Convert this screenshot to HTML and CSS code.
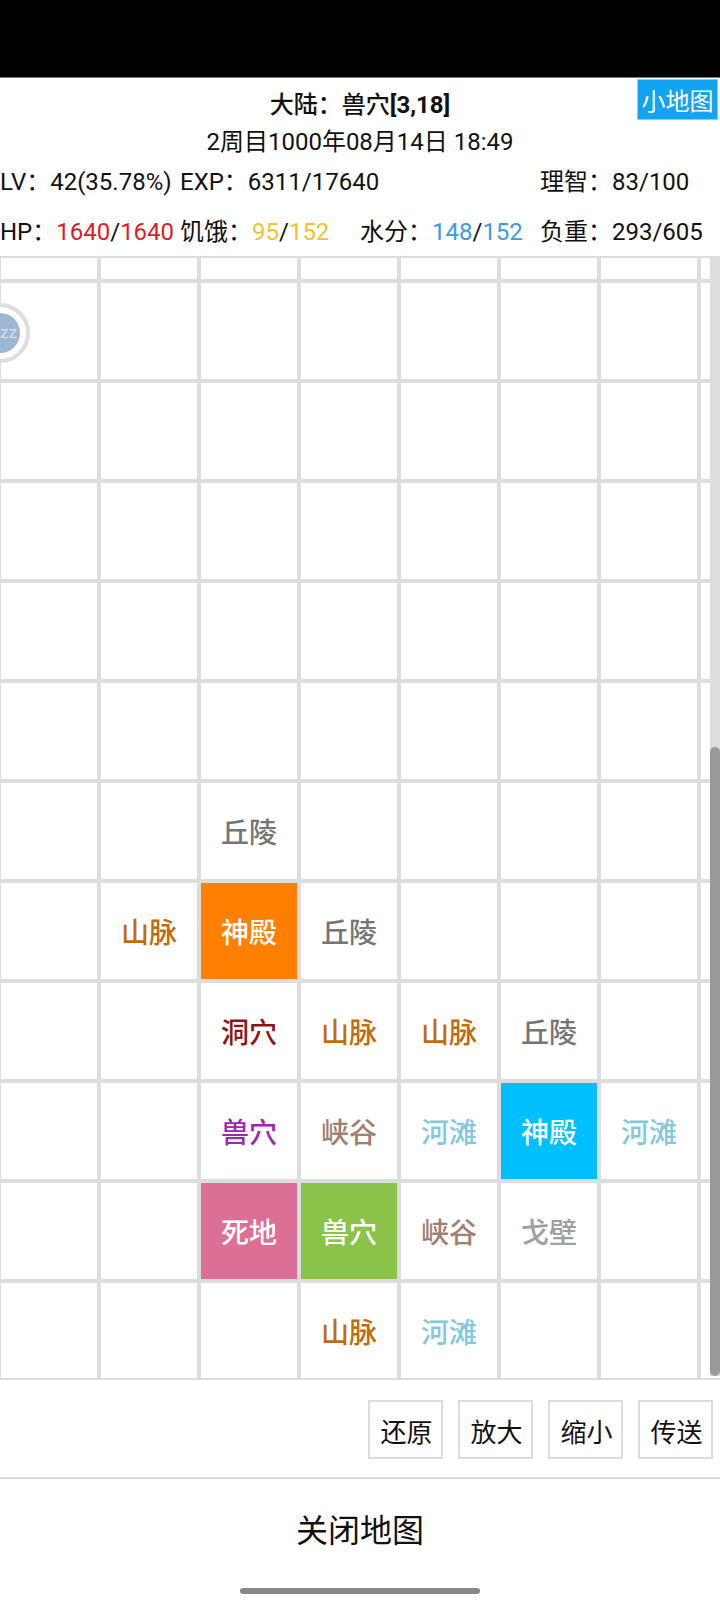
FILE: index.html
```html
<!DOCTYPE html>
<html lang="zh-CN">
<head>
<meta charset="UTF-8">
<title>地图</title>
<link rel="stylesheet" href="styles.css">
</head>
<body>

<div class="statusbar"></div>

<header class="info">
  <div class="title"><span>大陆：兽穴<b>[3,18]</b></span><button class="minimap">小地图</button></div>
  <div class="date">2周目1000年08月14日 18:49</div>
  <div class="stats stats-a">
    <span>LV：42(35.78%)</span>
    <span class="wide">EXP：6311/17640</span>
    <span>理智：83/100</span>
  </div>
  <div class="stats stats-b">
    <span>HP：<i class="red">1640</i>/<i class="red">1640</i></span>
    <span>饥饿：<i class="yellow">95</i>/<i class="yellow">152</i></span>
    <span>水分：<i class="blue">148</i>/<i class="blue">152</i></span>
    <span>负重：293/605</span>
  </div>
</header>

<section class="map">
  <div class="grid">
    <div></div><div></div><div></div><div></div><div></div><div></div><div></div><div></div>

    <div></div><div></div><div></div><div></div><div></div><div></div><div></div><div></div>
    <div></div><div></div><div></div><div></div><div></div><div></div><div></div><div></div>
    <div></div><div></div><div></div><div></div><div></div><div></div><div></div><div></div>
    <div></div><div></div><div></div><div></div><div></div><div></div><div></div><div></div>
    <div></div><div></div><div></div><div></div><div></div><div></div><div></div><div></div>

    <div></div><div></div><div class="hill">丘陵</div><div></div><div></div><div></div><div></div><div></div>
    <div></div><div class="mountain">山脉</div><div class="fill orange">神殿</div><div class="hill">丘陵</div><div></div><div></div><div></div><div></div>
    <div></div><div></div><div class="cave">洞穴</div><div class="mountain">山脉</div><div class="mountain">山脉</div><div class="hill">丘陵</div><div></div><div></div>
    <div></div><div></div><div class="lair">兽穴</div><div class="gorge">峡谷</div><div class="beach">河滩</div><div class="fill sky">神殿</div><div class="beach">河滩</div><div></div>
    <div></div><div></div><div class="fill pink">死地</div><div class="fill green">兽穴</div><div class="gorge">峡谷</div><div class="desert">戈壁</div><div></div><div></div>
    <div></div><div></div><div></div><div class="mountain">山脉</div><div class="beach">河滩</div><div></div><div></div><div></div>
  </div>

  <div class="player"><span>zz</span></div>
  <div class="scrollbar"><div class="thumb"></div></div>
</section>

<div class="tools">
  <button>还原</button>
  <button>放大</button>
  <button>缩小</button>
  <button>传送</button>
</div>

<div class="close">关闭地图</div>

<div class="homebar"></div>

</body>
</html>
```

FILE: styles.css
```css
*{box-sizing:border-box}
html,body{margin:0;height:1608px;overflow:hidden}
body{background:#fff;color:#111;font-family:Roboto,"Noto Sans CJK SC",sans-serif;font-size:24px}
i{font-style:normal}
button{font:inherit;color:inherit;background:none;cursor:pointer}

.statusbar{height:78px;background:#000;border-bottom:1px solid #777}

.info{height:178px;position:relative}
.title{height:48px;display:flex;justify-content:center;align-items:center;font-weight:500}
.title b{font-weight:700}
.minimap{position:absolute;top:1px;right:2px;width:81px;height:41px;padding:0;border:1px solid #9cc9e2;background:#12a3f2;color:#fff;font-weight:400}
.date{height:32px;line-height:32px;text-align:center}
.stats{display:grid;grid-template-columns:repeat(4,180px);white-space:nowrap}
.stats-a{height:48px;line-height:48px}
.stats-a .wide{grid-column:span 2}
.stats-b{height:50px;line-height:52px}
.red{color:#e01b24}
.yellow{color:#f2c230}
.blue{color:#3d9be0}

.map{height:1124px;position:relative;overflow:hidden;border-top:2px solid #ddd;border-bottom:2px solid #ddd}
.grid{display:grid;height:100%;padding-left:1px;background:#ddd;gap:4px;
  grid-template-columns:repeat(7,96px) 1fr;
  grid-template-rows:21px repeat(10,96px) 1fr}
.grid div{display:flex;align-items:center;justify-content:center;background:#fff;font-size:28px;font-weight:500}
.hill{color:#757575}
.mountain{color:#c26c0e}
.cave{color:#8e1414}
.lair{color:#9c27b0}
.gorge{color:#a1806f}
.beach{color:#84c8dc}
.desert{color:#a0a0a0}
.grid .fill{color:#fff}
.grid .orange{background:#ff8000}
.grid .sky{background:#00bfff}
.grid .pink{background:#dc6f95}
.grid .green{background:#8bc34a}

.player{position:absolute;left:-30px;top:45px;width:60px;height:60px;display:flex;align-items:center;justify-content:center;border:4px solid #ddd;border-radius:50%;background:#fff}
.player span{width:40px;height:40px;border-radius:50%;background:#9db6d6;color:#d8dfe8;font-size:17px;line-height:38px;text-align:left;padding-left:20px;white-space:nowrap;overflow:hidden}

.scrollbar{position:absolute;top:0;right:0;bottom:2px;width:10px;background:#ddd}
.thumb{position:absolute;left:0;right:0;top:489px;bottom:0;background:#999;border-radius:5px}

.tools{height:99px;display:flex;justify-content:flex-end;gap:15px;padding:20px 7px 0 0;border-bottom:2px solid #ddd}
.tools button{width:75px;height:59px;padding:2px 0 0 2px;border:2px solid #ddd;background:#fff;font-size:26px}

.close{height:109px;display:flex;align-items:center;justify-content:center;font-size:32px;padding-bottom:12px}

.homebar{width:240px;height:6px;margin:0 auto;background:#888;border-radius:3px}
```
